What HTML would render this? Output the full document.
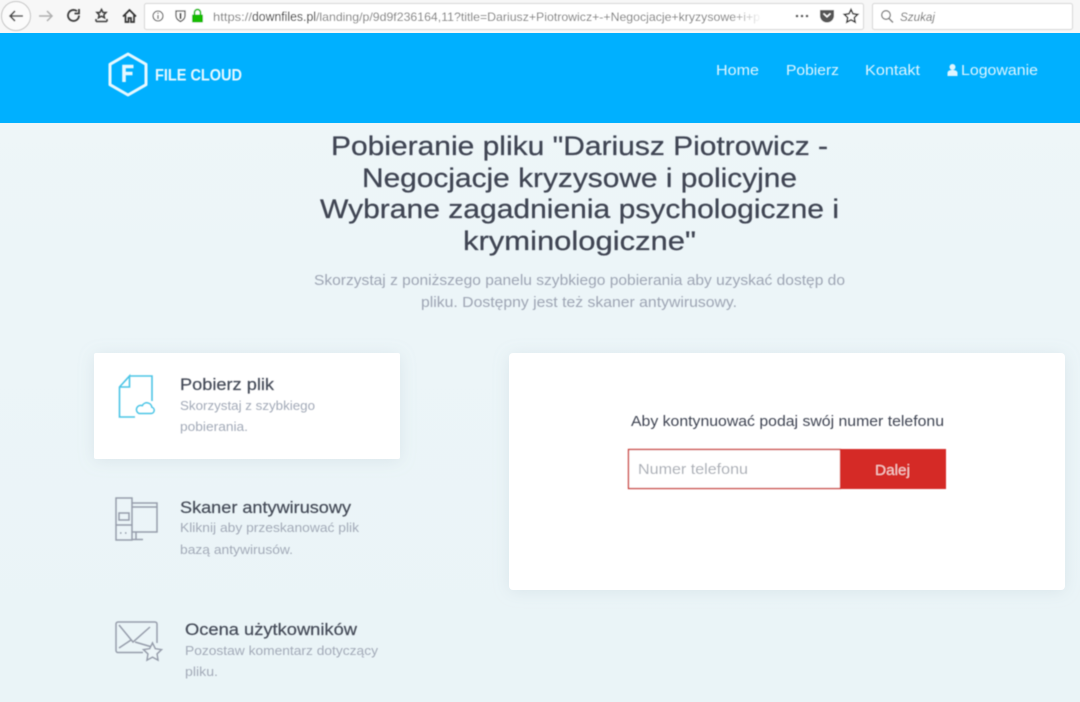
<!DOCTYPE html>
<html lang="pl"><head><meta charset="utf-8"><title>File Cloud</title>
<style>
html,body{margin:0;padding:0;width:1080px;height:702px;overflow:hidden;background:#eaf4f7}
svg{display:block}
text{font-family:"Liberation Sans",sans-serif}
</style></head><body>
<svg width="1080" height="702" viewBox="0 0 1080 702" xmlns="http://www.w3.org/2000/svg">
<defs>
<filter id="s" x="-10%" y="-20%" width="120%" height="140%"><feDropShadow dx="0" dy="2" stdDeviation="8" flood-color="#9fb4c0" flood-opacity=".22"/></filter>
<filter id="b"><feGaussianBlur stdDeviation=".4"/></filter>
<linearGradient id="fade" x1="0" x2="1"><stop offset="0" stop-color="#fff" stop-opacity="0"/><stop offset="1" stop-color="#fff"/></linearGradient>
<linearGradient id="bg" x1="0" x2="0" y1="0" y2="1"><stop offset="0" stop-color="#eff6f9"/><stop offset=".4" stop-color="#ecf5f8"/><stop offset="1" stop-color="#eaf4f7"/></linearGradient>
</defs>
<rect width="1080" height="702" fill="url(#bg)"/>
<!-- toolbar -->
<rect width="1080" height="33" fill="#f7f7f7"/>
<rect y="33" width="1080" height="90" fill="#00b0ff"/>
<g filter="url(#b)">
<circle cx="16" cy="16" r="14.500" fill="#fbfbfb" stroke="#c4c4c4"/>
<path d="M23 16H10M15 11l-5 5 5 5" fill="none" stroke="#4a4a4a" stroke-width="1.600"/>
<path d="M52 16H39M47 11l5 5-5 5" fill="none" stroke="#b0b0b0" stroke-width="1.500"/>
<path d="M79 15.500a5.500 5.500 0 1 1-2-4.300M79 9v4.500h-4.500" fill="none" stroke="#3c3c3c" stroke-width="1.800"/>
<path d="M101.500 9.500l1.500 3h3l-2.200 2.300.7 3-3-1.600-3 1.600.7-3-2.200-2.300h3zM96 21.500h11M96 19v2.500M107 19v2.500" fill="none" stroke="#3c3c3c" stroke-width="1.500"/>
<path d="M123 16.500l6.500-6.500 6.500 6.500M125.500 15v7h3v-4h2.500v4h3v-7" fill="none" stroke="#333" stroke-width="1.700"/>
<rect x="144.500" y="3.500" width="719" height="26" rx="2" fill="#fff" stroke="#d6d6d6"/>
<circle cx="158" cy="16" r="5" fill="none" stroke="#555" stroke-width="1.100"/>
<path d="M158 15v4M158 12.600v1.100" stroke="#555" stroke-width="1.200"/>
<path d="M176 11h9v5c0 3-2.500 4.500-4.500 5.500-2-1-4.500-2.500-4.500-5.500z" fill="none" stroke="#555" stroke-width="1.300"/><path d="M180.500 13v6" stroke="#555" stroke-width="2"/>
<rect x="192" y="14.500" width="11" height="8" rx="1" fill="#12bc00"/>
<path d="M194.500 15v-2.500a3 3 0 0 1 6 0V15" fill="none" stroke="#12bc00" stroke-width="1.700"/>
<text x="213" y="21" font-size="12" fill="#7b7b7b" textLength="39" lengthAdjust="spacingAndGlyphs">https://</text>
<text x="252" y="21" font-size="12.500" fill="#222" textLength="64" lengthAdjust="spacingAndGlyphs">downfiles.pl</text>
<text x="316" y="21" font-size="12" fill="#7b7b7b" textLength="444" lengthAdjust="spacingAndGlyphs">/landing/p/9d9f236164,11?title=Dariusz+Piotrowicz+-+Negocjacje+kryzysowe+i+p</text>
<rect x="730" y="6" width="32" height="20" fill="url(#fade)"/>
<circle cx="797" cy="16" r="1.300" fill="#444"/><circle cx="802" cy="16" r="1.300" fill="#444"/><circle cx="807" cy="16" r="1.300" fill="#444"/>
<path d="M820 10h14v5.500a7 7 0 0 1-14 0z" fill="#555"/><path d="M823.500 13.500l3.500 3.200 3.500-3.200" fill="none" stroke="#fff" stroke-width="1.500"/>
<path d="M851 9.500l2 4.300 4.700.6-3.400 3.200.9 4.600-4.200-2.300-4.200 2.300.9-4.600-3.400-3.200 4.700-.6z" fill="none" stroke="#333" stroke-width="1.500"/>
<rect x="872.500" y="3.500" width="200" height="26" rx="2" fill="#fff" stroke="#d6d6d6"/>
<circle cx="886" cy="15" r="4.300" fill="none" stroke="#777" stroke-width="1.300"/><path d="M889 18.500l4 4" stroke="#777" stroke-width="1.500"/>
<text x="900" y="21" font-size="12" font-style="italic" fill="#6e6e6e" textLength="35" lengthAdjust="spacingAndGlyphs">Szukaj</text>
</g>
<!-- nav -->
<g filter="url(#b)">
<path d="M128 54l18 10.300v20.400L128 95l-18-10.300V64.300z" fill="none" stroke="#e6f8ff" stroke-width="3" stroke-linejoin="round"/>
<path d="M133.500 66.500h-9.500V82M124 73.500h8.500" fill="none" stroke="#e6f8ff" stroke-width="3.600"/>
<text x="155" y="80.500" font-size="16.500" font-weight="bold" fill="#e6f8ff" textLength="87" lengthAdjust="spacingAndGlyphs">FILE CLOUD</text>
<g font-size="14.500" fill="#def5ff">
<text x="716" y="75" textLength="43" lengthAdjust="spacingAndGlyphs">Home</text>
<text x="786" y="75" textLength="53" lengthAdjust="spacingAndGlyphs">Pobierz</text>
<text x="865" y="75" textLength="55" lengthAdjust="spacingAndGlyphs">Kontakt</text>
<circle cx="952.500" cy="67" r="3" fill="#def5ff"/><path d="M947.500 76v-3c0-2 2-3 5-3s5 1 5 3v3z" fill="#def5ff"/>
<text x="961" y="75" textLength="77" lengthAdjust="spacingAndGlyphs">Logowanie</text>
</g>
</g>
<!-- heading -->
<g filter="url(#b)" fill="#3f4553" stroke="#3f4553" stroke-width=".25" font-size="27">
<text x="331" y="155" textLength="497" lengthAdjust="spacingAndGlyphs">Pobieranie pliku "Dariusz Piotrowicz -</text>
<text x="362" y="187" textLength="435" lengthAdjust="spacingAndGlyphs">Negocjacje kryzysowe i policyjne</text>
<text x="320" y="218" textLength="519" lengthAdjust="spacingAndGlyphs">Wybrane zagadnienia psychologiczne i</text>
<text x="463" y="250" textLength="233" lengthAdjust="spacingAndGlyphs">kryminologiczne"</text>
</g>
<g filter="url(#b)" fill="#9ea5b4" font-size="15">
<text x="314" y="285" textLength="531" lengthAdjust="spacingAndGlyphs">Skorzystaj z poniższego panelu szybkiego pobierania aby uzyskać dostęp do</text>
<text x="421" y="307" textLength="316" lengthAdjust="spacingAndGlyphs">pliku. Dostępny jest też skaner antywirusowy.</text>
</g>
<!-- cards -->
<rect x="94" y="353" width="306" height="106" rx="2" fill="#fff" filter="url(#s)"/>
<rect x="509" y="353" width="556" height="237" rx="4" fill="#fff" filter="url(#s)"/>
<g filter="url(#b)">
<path d="M129 376h23v25M135 417h-15.500v-30l10-11v11h-10" fill="none" stroke="#4cc5e6" stroke-width="1.600"/>
<path d="M139 413.500h12a3.200 3.200 0 0 0 .8-6.300 5 5 0 0 0-9.500-1.500 4 4 0 0 0-3.300 7.800z" fill="none" stroke="#4cc5e6" stroke-width="1.500"/>
<g fill="none" stroke="#969dab" stroke-width="1.500">
<path d="M116 498h16v42h-16zM132 503h25v29h-25M132 507h25M116 525h16M136 532v7M132 539.500h11M119 513h10v7h-10z"/>
<path d="M120 533h1.500M125 533h1.500" stroke-width="1.600"/>
<path d="M143 652.500h-25a2 2 0 0 1-2-2V624a2 2 0 0 1 2-2h37a2 2 0 0 1 2 2v19M119 625l14 17 17-15M119 648l12-8M135 642l17 5"/>
<path d="M152.500 643l2.800 5.700 6.200.9-4.500 4.300 1 6.200-5.500-3-5.500 3 1-6.200-4.500-4.300 6.200-.9z" stroke-width="1.500" fill="#ecf5f8"/>
</g>
<g fill="#454b58" stroke="#454b58" stroke-width=".2" font-size="16.500">
<text x="180" y="390" textLength="94" lengthAdjust="spacingAndGlyphs">Pobierz plik</text>
<text x="180" y="513" textLength="171" lengthAdjust="spacingAndGlyphs">Skaner antywirusowy</text>
<text x="185" y="635" textLength="172" lengthAdjust="spacingAndGlyphs">Ocena użytkowników</text>
</g>
<g fill="#a3aab8" font-size="13">
<text x="180" y="410" textLength="135" lengthAdjust="spacingAndGlyphs">Skorzystaj z szybkiego</text>
<text x="180" y="431" textLength="68" lengthAdjust="spacingAndGlyphs">pobierania.</text>
<text x="180" y="532" textLength="179" lengthAdjust="spacingAndGlyphs">Kliknij aby przeskanować plik</text>
<text x="180" y="554" textLength="113" lengthAdjust="spacingAndGlyphs">bazą antywirusów.</text>
<text x="185" y="655" textLength="193" lengthAdjust="spacingAndGlyphs">Pozostaw komentarz dotyczący</text>
<text x="185" y="676" textLength="33" lengthAdjust="spacingAndGlyphs">pliku.</text>
</g>
<text x="631" y="426" font-size="14.500" fill="#3f4553" textLength="313" lengthAdjust="spacingAndGlyphs">Aby kontynuować podaj swój numer telefonu</text>
<rect x="628.500" y="449.500" width="212" height="39" fill="#fff" stroke="#c8352f" stroke-width="1.300"/>
<rect x="840" y="449" width="106" height="40" fill="#d52a25"/>
<text x="638" y="474" font-size="14.500" fill="#a9adb5" textLength="110" lengthAdjust="spacingAndGlyphs">Numer telefonu</text>
<text x="875" y="475" font-size="14.500" fill="#f6cfcd" textLength="35" lengthAdjust="spacingAndGlyphs">Dalej</text>
</g>
</svg>
</body></html>
